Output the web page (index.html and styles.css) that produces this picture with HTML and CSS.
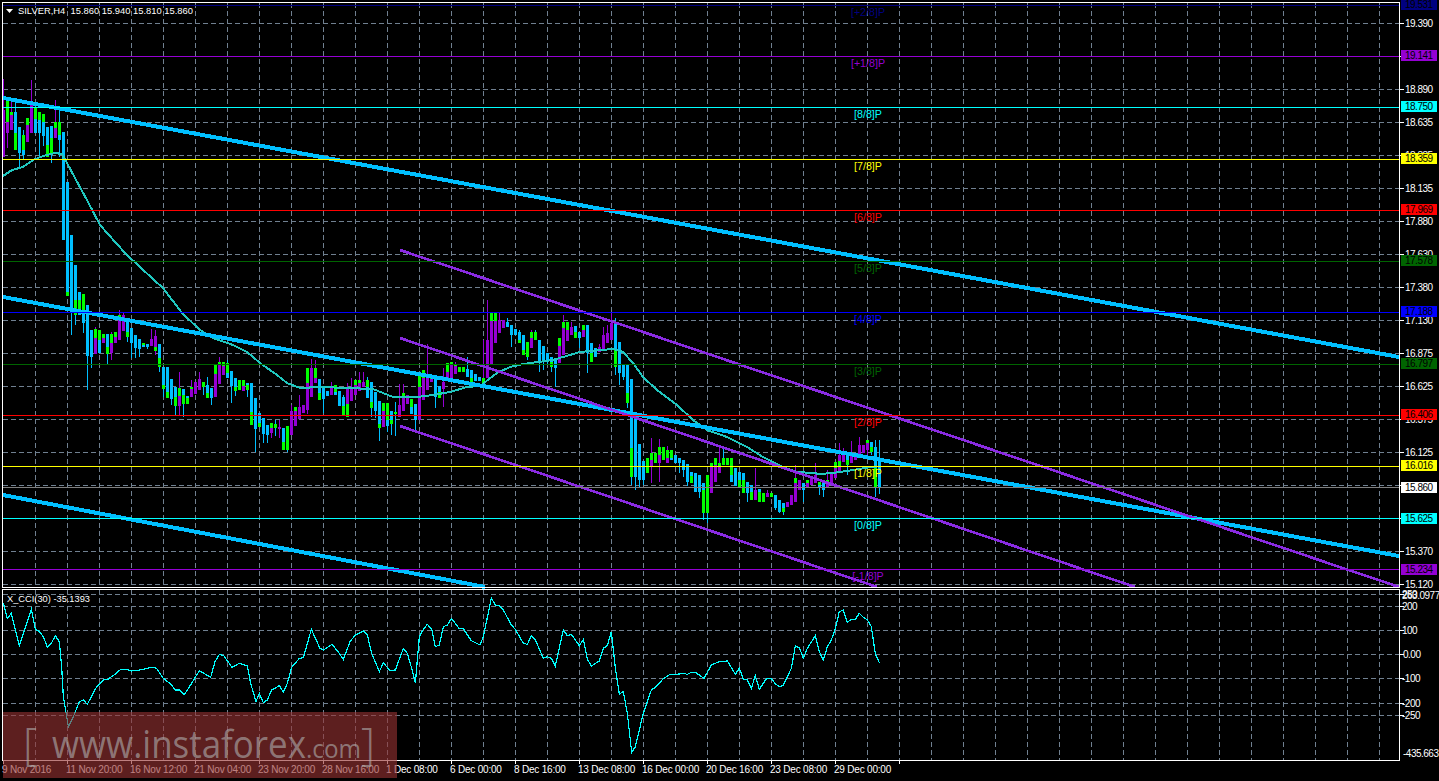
FILE: index.html
```html
<!DOCTYPE html>
<html lang="en">
<head>
<meta charset="utf-8">
<title>SILVER,H4</title>
<link rel="stylesheet" href="styles.css">
</head>
<body>
<main class="terminal">
<svg class="chart" width="1439" height="781" viewBox="0 0 1439 781" xmlns="http://www.w3.org/2000/svg">
  <g id="grid"></g>
  <g id="candles" shape-rendering="crispEdges"></g>
  <polyline id="ma" class="ma"/>
  <g class="trend">
    <line x1="3" y1="98" x2="1399" y2="357"/>
    <line x1="3" y1="297" x2="1399" y2="556"/>
    <line x1="3" y1="495" x2="485" y2="587"/>
  </g>
  <g class="channel">
    <line x1="400" y1="250" x2="1399" y2="587"/>
    <line x1="400" y1="338" x2="1135" y2="587"/>
    <line x1="400" y1="426" x2="877" y2="587"/>
  </g>
  <g class="levels" shape-rendering="crispEdges">
    <line class="c-navy" x1="3" x2="1399" y1="5.5" y2="5.5"/>
    <line class="c-violet" x1="3" x2="1399" y1="56.5" y2="56.5"/>
    <line class="c-cyan" x1="3" x2="1399" y1="107.5" y2="107.5"/>
    <line class="c-yellow" x1="3" x2="1399" y1="159.5" y2="159.5"/>
    <line class="c-red" x1="3" x2="1399" y1="210.5" y2="210.5"/>
    <line class="c-green" x1="3" x2="1399" y1="261.5" y2="261.5"/>
    <line class="c-blue" x1="3" x2="1399" y1="312.5" y2="312.5"/>
    <line class="c-green" x1="3" x2="1399" y1="364.5" y2="364.5"/>
    <line class="c-red" x1="3" x2="1399" y1="415.5" y2="415.5"/>
    <line class="c-yellow" x1="3" x2="1399" y1="466.5" y2="466.5"/>
    <line class="c-gray" x1="3" x2="1399" y1="487.5" y2="487.5"/>
    <line class="c-cyan" x1="3" x2="1399" y1="518.5" y2="518.5"/>
    <line class="c-violet" x1="3" x2="1399" y1="569.5" y2="569.5"/>
  </g>
  <polyline id="cci" class="cci"/>

  <g class="murrey">
    <text class="t-navy" x="868" y="16">[+2/8]P</text>
    <text class="t-violet" x="868" y="67">[+1/8]P</text>
    <text class="t-cyan" x="868" y="118">[8/8]P</text>
    <text class="t-yellow" x="868" y="170">[7/8]P</text>
    <text class="t-red" x="868" y="221">[6/8]P</text>
    <text class="t-green" x="868" y="272">[5/8]P</text>
    <text class="t-blue" x="868" y="323">[4/8]P</text>
    <text class="t-green" x="868" y="375">[3/8]P</text>
    <text class="t-red" x="868" y="426">[2/8]P</text>
    <text class="t-yellow" x="868" y="477">[1/8]P</text>
    <text class="t-cyan" x="868" y="529">[0/8]P</text>
    <text class="t-violet" x="868" y="580">[-1/8]P</text>
  </g>

  <polygon class="menu-arrow" points="6,9 13,9 9.5,13"/>
  <text class="label" x="18" y="14" textLength="175" lengthAdjust="spacingAndGlyphs">SILVER,H4&#160; 15.860 15.940 15.810 15.860</text>
  <text class="label" x="7" y="602" textLength="83" lengthAdjust="spacingAndGlyphs">X_CCI(30) -35.1393</text>

  <g class="axis">
    <text x="1405" y="27">19.390</text>
    <text x="1405" y="93">18.890</text>
    <text x="1405" y="126">18.635</text>
    <text x="1405" y="159">18.385</text>
    <text x="1405" y="192">18.135</text>
    <text x="1405" y="225">17.880</text>
    <text x="1405" y="258">17.630</text>
    <text x="1405" y="291">17.380</text>
    <text x="1405" y="324">17.130</text>
    <text x="1405" y="357">16.875</text>
    <text x="1405" y="390">16.625</text>
    <text x="1405" y="423">16.375</text>
    <text x="1405" y="456">16.125</text>
    <text x="1405" y="555">15.370</text>
    <text x="1405" y="588">15.120</text>
  </g>

  <g class="tags">
    <rect class="f-navy" x="1401" y="0" width="36" height="10"/><text x="1405" y="8">19.531</text>
    <rect class="f-violet" x="1401" y="50" width="36" height="11"/><text x="1405" y="59">19.141</text>
    <rect class="f-cyan" x="1401" y="101" width="36" height="11"/><text x="1405" y="110">18.750</text>
    <rect class="f-yellow" x="1401" y="153" width="36" height="11"/><text x="1405" y="162">18.359</text>
    <rect class="f-red" x="1401" y="204" width="36" height="11"/><text x="1405" y="213">17.969</text>
    <rect class="f-green" x="1401" y="255" width="36" height="11"/><text x="1405" y="264">17.578</text>
    <rect class="f-blue" x="1401" y="306" width="36" height="11"/><text x="1405" y="315">17.188</text>
    <rect class="f-green" x="1401" y="358" width="36" height="11"/><text x="1405" y="367">16.797</text>
    <rect class="f-red" x="1401" y="409" width="36" height="11"/><text x="1405" y="418">16.406</text>
    <rect class="f-yellow" x="1401" y="460" width="36" height="11"/><text x="1405" y="469">16.016</text>
    <rect class="f-white" x="1401" y="482" width="36" height="11"/><text x="1405" y="491">15.860</text>
    <rect class="f-cyan" x="1401" y="513" width="36" height="11"/><text x="1405" y="522">15.625</text>
    <rect class="f-violet" x="1401" y="564" width="36" height="11"/><text x="1405" y="573">15.234</text>
  </g>

  <g class="axis">
    <text x="1402" y="598">250</text>
    <text x="1402" y="599">263.0977</text>
    <text x="1402" y="610">200</text>
    <text x="1402" y="634">100</text>
    <text x="1403" y="658">0.00</text>
    <text x="1402" y="682">-100</text>
    <text x="1402" y="707">-200</text>
    <text x="1402" y="719">-250</text>
    <text x="1403" y="757">-435.663</text>
  </g>

  <g class="axis dates">
    <text x="2" y="773">9 Nov 2016</text>
    <text x="66" y="773">11 Nov 20:00</text>
    <text x="130" y="773">16 Nov 12:00</text>
    <text x="194" y="773">21 Nov 04:00</text>
    <text x="258" y="773">23 Nov 20:00</text>
    <text x="322" y="773">28 Nov 16:00</text>
    <text x="386" y="773">1 Dec 08:00</text>
    <text x="450" y="773">6 Dec 00:00</text>
    <text x="514" y="773">8 Dec 16:00</text>
    <text x="578" y="773">13 Dec 08:00</text>
    <text x="642" y="773">16 Dec 00:00</text>
    <text x="706" y="773">20 Dec 16:00</text>
    <text x="770" y="773">23 Dec 08:00</text>
    <text x="834" y="773">29 Dec 00:00</text>
  </g>

  <g class="frame" shape-rendering="crispEdges">
    <rect x="2.5" y="2.5" width="1397" height="585"/>
    <rect x="2.5" y="589.5" width="1397" height="171"/>
  </g>

  <g class="watermark">
    <rect class="wm-bg" x="3" y="712" width="394" height="66"/>
    <text class="wm-bracket" x="23" y="760">[</text>
    <text class="wm-big" x="52" y="758" textLength="254" lengthAdjust="spacingAndGlyphs">www.instaforex</text>
    <text class="wm-small" x="306" y="758" textLength="55" lengthAdjust="spacingAndGlyphs">.com</text>
    <text class="wm-bracket" x="361" y="760">]</text>
  </g>
</svg>
</main>
<script src="chart.js"></script>
</body>
</html>
```
FILE: styles.css
```css
html, body {
  margin: 0;
  padding: 0;
  background: #000;
  overflow: hidden;
}
.terminal {
  width: 1439px;
  height: 781px;
}
.chart {
  display: block;
}
.gridline {
  stroke: #708090;
  stroke-width: 1;
  stroke-dasharray: 5 3;
}
.tick {
  stroke: #fff;
  stroke-width: 1;
}
.ma {
  fill: none;
  stroke: #20c8c0;
  stroke-width: 2;
  shape-rendering: crispEdges;
}
.cci {
  fill: none;
  stroke: #00ffff;
  stroke-width: 1.2;
  shape-rendering: crispEdges;
}
.trend line {
  stroke: #00bfff;
  stroke-width: 4;
  shape-rendering: crispEdges;
}
.channel line {
  stroke: #8a2be2;
  stroke-width: 2.6;
  shape-rendering: crispEdges;
}
.levels line {
  stroke-width: 1;
}
.c-navy { stroke: #000080; }
.c-violet { stroke: #9400d3; }
.c-cyan { stroke: #00ffff; }
.c-yellow { stroke: #ffff00; }
.c-red { stroke: #ff0000; }
.c-green { stroke: #006400; }
.c-blue { stroke: #0000ff; }
.c-gray { stroke: #808080; }
.murrey text {
  font-family: "Liberation Sans", Arial, sans-serif;
  font-size: 10.7px;
  text-anchor: middle;
}
.t-navy { fill: #000080; }
.t-violet { fill: #9400d3; }
.t-cyan { fill: #00ffff; }
.t-yellow { fill: #ffff00; }
.t-red { fill: #ff0000; }
.t-green { fill: #006400; }
.t-blue { fill: #0000ff; }
.label,
.axis text,
.tags text {
  font-family: "Liberation Sans", Arial, sans-serif;
  font-size: 10px;
  letter-spacing: -0.5px;
}
.label {
  font-size: 9.6px;
  letter-spacing: 0;
}
.label,
.axis text {
  fill: #fff;
}
.dates text {
  letter-spacing: -0.2px;
}
.tags text {
  fill: #000;
}
.f-navy { fill: #000080; }
.f-violet { fill: #9400d3; }
.f-cyan { fill: #00ffff; }
.f-yellow { fill: #ffff00; }
.f-red { fill: #ff0000; }
.f-green { fill: #006400; }
.f-blue { fill: #0000ff; }
.f-white { fill: #fff; }
.menu-arrow {
  fill: #fff;
}
.frame rect {
  fill: none;
  stroke: #fff;
  stroke-width: 1;
}
.body-blue { fill: #00bfff; }
.body-purple { fill: #9400d3; }
.body-lime { fill: #00ff00; }
.wm-bg {
  fill: rgba(150, 50, 50, 0.62);
}
.watermark text {
  font-family: "Open Sans", "Liberation Sans", sans-serif;
  fill: rgba(175, 175, 175, 0.62);
}
.wm-big { font-size: 38px; }
.wm-small { font-size: 25px; }
.wm-bracket { font-size: 44px; font-weight: 300; }
```
FILE: chart.js
```javascript
(function () {
  var NS = 'http://www.w3.org/2000/svg';
  function el(name, attrs, parent) {
    var n = document.createElementNS(NS, name);
    for (var k in attrs) n.setAttribute(k, attrs[k]);
    parent.appendChild(n);
    return n;
  }

  var grid = document.getElementById('grid');
  var x;
  for (x = 35; x < 1399; x += 32) {
    el('line', { 'class': 'gridline', x1: x + .5, x2: x + .5, y1: 3, y2: 587 }, grid);
    el('line', { 'class': 'gridline', x1: x + .5, x2: x + .5, y1: 590, y2: 760 }, grid);
  }
  [23, 56, 89, 122, 155, 188, 221, 254, 287, 320, 353, 386, 419, 452, 485, 518, 551, 584,
   594, 606, 630, 654, 678, 703, 715].forEach(function (y) {
    el('line', { 'class': 'gridline', x1: 3, x2: 1399, y1: y + .5, y2: y + .5 }, grid);
    el('line', { 'class': 'tick', x1: 1400, x2: 1404, y1: y + .5, y2: y + .5 }, grid);
  });
  for (x = 3; x < 900; x += 64) {
    el('line', { 'class': 'tick', x1: x + .5, x2: x + .5, y1: 760, y2: 764 }, grid);
  }

  // x, colour, body top, body bottom, wick top, wick bottom, lime top, lime bottom
  var C = [
    [3,'p',110,157,79,0],[7,'p',100,133,0,148,100,122],[11,'p',112,130,102,0,112,115],[15,'b',112,150,102,0,133,150],
    [19,'b',127,153,0,168],[23,'b',135,155,130,160,135,150],[27,'p',118,142,0,0,118,125],[31,'p',105,133,80,0],
    [35,'b',108,133,103,0,108,119],[39,'b',112,133,0,158,112,120],[43,'b',114,136,0,146,114,122],[47,'b',127,157,0,0,145,157],
    [51,'b',126,155,0,163,138,155],[55,'p',122,138,100,0,122,128],[59,'b',122,140,110,157,122,135],[63,'b',132,240,0,0],
    [67,'b',182,296,0,0,292,296],[71,'b',235,312,0,335],[75,'b',265,315,0,325,300,315],[79,'b',292,315,0,0,300,310],
    [83,'b',294,323,0,333,294,310],[87,'b',305,356,0,390],[91,'b',330,357,0,368],[95,'p',329,354,327,0,329,338],
    [99,'b',330,353,0,0,330,340],[103,'p',334,343,0,0,334,338],[107,'b',334,354,0,365,347,354],[111,'p',334,353,332,360,334,343],
    [115,'p',332,343,0,0,332,337],[119,'p',315,340,310,0,315,320],[123,'p',315,331,312,0],[127,'b',319,337,0,342,332,337],
    [131,'b',328,343,0,358],[135,'b',335,348,0,358],[139,'b',339,349,0,357],[143,'b',343,347,0,0,343,345],
    [147,'b',344,347,0,349],[151,'p',339,346,329,0],[155,'p',336,351,330,355,347,351],[159,'b',344,367,0,372,358,367],
    [163,'b',367,389,0,397,385,389],[167,'b',367,398,0,0,392,398],[171,'b',379,399,0,405],[175,'b',387,406,0,415,397,406],
    [179,'p',388,406,372,415,388,396],[183,'b',389,404,0,417,395,404],[187,'b',396,404,0,0,398,404],[191,'p',387,397,380,0,387,389],
    [195,'p',382,394,0,0],[199,'p',379,390,372,0],[203,'b',382,387,0,395,382,387],[207,'b',385,398,377,0,393,398],
    [211,'b',388,398,0,405],[215,'p',365,397,0,0,365,374],[219,'p',362,384,357,0,362,365],[223,'p',362,375,0,0,362,366],
    [227,'b',363,378,360,0,363,373],[231,'b',371,386,0,403],[235,'b',378,391,0,396,387,391],[239,'b',380,390,0,0,380,390],
    [243,'p',380,391,0,0,380,386],[247,'b',383,390,0,397,385,390],[251,'b',383,425,0,0,412,425],[255,'b',398,429,0,452],
    [259,'b',413,427,0,0,423,427],[263,'b',418,434,0,443],[267,'b',425,435,0,443],[271,'p',423,433,0,438,423,428],
    [275,'b',424,428,420,436,424,428],[279,'p',427,429,420,438],[283,'b',428,450,0,0,442,450],[287,'b',426,450,0,452,426,450],
    [291,'p',411,435,405,0],[295,'p',407,426,0,0,407,411],[299,'p',407,419,395,0],[303,'p',405,413,0,0],
    [307,'p',368,410,0,414,368,383],[311,'p',368,397,359,0],[315,'p',368,383,360,0,368,378],[319,'b',379,400,0,0,393,400],
    [323,'b',386,399,0,413],[327,'b',391,396,0,0],[331,'p',388,395,382,0],[335,'b',385,395,0,0,385,392],
    [339,'b',391,406,0,0],[343,'b',397,415,395,0,406,415],[347,'p',388,417,383,0,404,417],[351,'p',388,401,378,0],
    [355,'p',380,395,0,0,380,385],[359,'p',380,391,372,0,380,383],[363,'p',382,387,372,0],[367,'b',380,398,377,0,380,387],
    [371,'b',382,408,0,417,402,408],[375,'b',392,411,0,418],[379,'b',401,428,0,441,424,428],[383,'p',403,427,0,0,403,411],
    [387,'b',403,426,0,432,403,420],[391,'b',411,424,0,435,420,424],[395,'b',412,414,402,436,412,414],[399,'p',405,417,384,0],
    [403,'p',393,411,384,0,393,397],[407,'p',395,404,0,0],[411,'b',399,414,0,0,399,407],[415,'b',404,420,0,431],
    [419,'p',373,420,0,0,373,387],[423,'p',370,400,0,0,370,378],[427,'p',377,390,344,0],[431,'p',375,382,0,0,375,379],
    [435,'b',377,397,0,408],[439,'b',386,398,0,0,392,398],[443,'p',382,389,368,407],[447,'p',363,380,0,0,363,372],
    [451,'p',362,380,0,0,362,365],[455,'p',365,374,362,0,365,366],[459,'p',367,372,0,0,367,372],[463,'p',367,372,0,0,367,372],
    [467,'b',369,377,357,0],[471,'b',370,382,0,0,378,382],[475,'b',374,381,0,0],[479,'b',377,381,0,0],
    [483,'p',378,386,340,0,378,384],[487,'p',340,378,300,0],[491,'p',313,365,0,0,313,321],[495,'p',313,343,0,0,313,321],
    [499,'p',320,333,312,0],[503,'p',320,328,0,0],[507,'b',322,327,318,0],[511,'b',325,335,0,347],
    [515,'b',329,335,0,0],[519,'b',332,343,330,0,340,343],[523,'b',335,355,0,0,350,355],[527,'b',342,357,0,360,342,357],
    [531,'p',332,348,330,0,332,338],[535,'b',332,340,330,0,332,340],[539,'b',340,362,0,372],[543,'b',346,362,0,370],
    [547,'b',353,362,0,365],[551,'b',357,367,0,372,362,367],[555,'b',359,368,0,387],[559,'p',338,363,0,0,338,346],
    [563,'p',322,355,315,0,322,328],[567,'p',322,341,0,0,322,330],[571,'p',327,335,322,0],[575,'b',326,338,0,0,332,338],
    [579,'b',332,338,0,348],[583,'p',325,337,0,0,325,330],[587,'b',325,353,0,373],[591,'b',343,362,0,362,353,362],
    [595,'b',348,357,0,0],[599,'p',347,352,344,0],[603,'p',335,350,327,0],[607,'p',333,343,325,0],
    [611,'p',323,340,313,0],[615,'b',322,367,318,375,350,367],[619,'b',342,373,0,385],[623,'b',365,377,0,380],
    [627,'b',365,403,0,408,393,403],[631,'b',379,477,0,485,448,477],[635,'b',417,477,0,490],[639,'b',444,480,0,488],
    [643,'b',461,480,0,485],[647,'b',458,473,0,0,458,473],[651,'p',453,467,438,483,453,460],[655,'b',453,463,0,0,453,463],
    [659,'p',447,463,439,482,447,455],[663,'b',447,460,0,0,447,460],[667,'p',450,463,446,0,450,458],[671,'b',450,460,0,0,450,458],
    [675,'b',455,463,0,0],[679,'b',458,463,0,473],[683,'b',460,470,0,477],[687,'b',464,482,0,486],
    [691,'b',472,483,0,0,476,483],[695,'b',473,492,0,0],[699,'b',475,492,0,498],[703,'b',483,513,0,520,490,513],
    [707,'b',475,513,0,523,475,513],[711,'p',463,493,0,0,463,467],[715,'p',458,482,0,0,458,465],[719,'p',463,473,448,0,463,466],
    [723,'b',458,465,448,0,458,465],[727,'b',458,465,0,0,458,465],[731,'b',458,482,0,0,458,475],[735,'b',468,486,0,0],
    [739,'b',472,487,0,0,480,487],[743,'b',473,493,0,0,480,493],[747,'b',482,493,0,502],[751,'b',485,500,0,0,492,500],
    [755,'p',490,500,468,0],[759,'b',489,502,0,0,492,502],[763,'b',493,502,0,0,493,502],[767,'p',493,497,490,0],
    [771,'b',493,497,0,0,493,497],[775,'b',495,508,0,510],[779,'b',500,512,0,513],[783,'b',503,512,0,515,508,512],
    [787,'p',502,507,0,0],[791,'p',495,505,0,0],[795,'p',478,502,465,0,478,483],[799,'p',480,490,0,0],
    [803,'b',483,490,0,502],[807,'p',480,487,0,0,480,483],[811,'p',477,485,0,0],[815,'p',475,483,463,0],
    [819,'b',482,488,0,495,482,485],[823,'b',483,490,0,497],[827,'p',480,487,470,0,480,484],[831,'p',473,483,0,0],
    [835,'p',462,478,0,0,462,468],[839,'p',455,472,443,0,461,466],[843,'p',453,462,448,0],[847,'b',455,465,0,475,460,465],
    [851,'p',453,463,441,0],[855,'p',453,460,0,0],[859,'p',445,455,437,0],[863,'p',445,453,0,0],
    [867,'p',440,450,0,455,440,443],[871,'b',442,452,0,455,447,452],[875,'b',447,487,440,497,468,487],[879,'b',460,487,440,494]
  ];

  var g = document.getElementById('candles');
  C.forEach(function (c) {
    var xx = c[0], col = c[1] === 'b' ? 'body-blue' : 'body-purple';
    var wt = c[4] || c[2], wb = c[5] || c[3];
    el('rect', { 'class': col, x: xx, y: wt, width: 1, height: wb - wt }, g);
    el('rect', { 'class': col, x: xx - 1, y: c[2], width: 3, height: c[3] - c[2] }, g);
    if (c[6]) el('rect', { 'class': 'body-lime', x: xx - 1, y: c[6], width: 3, height: c[7] - c[6] }, g);
  });

  document.getElementById('ma').setAttribute('points',
    '3,176 12,170 23,167 33,160 43,156 55,153 62,154 67,163 75,178 87,200 100,225 125,253 154,280 163,288 ' +
    '182,313 200,330 213,338 233,345 247,352 260,363 277,375 287,383 300,388 320,387 347,388 373,389 393,397 ' +
    '417,397 433,395 450,392 467,387 480,386 497,373 510,367 523,364 553,360 563,357 580,352 613,349 623,352 ' +
    '633,363 643,377 657,390 677,405 693,420 707,430 727,437 747,447 763,457 773,462 783,467 797,472 813,473 ' +
    '820,474 833,473 853,470 877,466');

  var a = [[10,70],[22,115],[34,100],[46,150],[58,198],[70,160],[94,88],[106,148],[118,155],[130,170],[142,202],[154,190],[166,167],[178,185],[185,260],[190,350],[205,440],[220,410],[238,365],[250,360],[262,373],[290,320],[310,300],[325,297],[345,283],[362,268],[380,268],[395,273],[420,270],[455,262],[470,265],[490,295],[512,312],[526,330],[540,330],[552,345],[575,310],[598,272],[632,292],[645,245],[658,223],[672,228],[696,262],[718,250],[742,258],[752,310],[768,365],[778,340],[790,368],[802,360],[815,330],[838,317],[850,337],[862,310],[875,262],[898,235],[910,233],[934,148],[960,205],[970,210],[996,193],[1018,220],[1030,238],[1050,185],[1066,165],[1090,153],[1102,165],[1115,220],[1138,275],[1150,248],[1170,272],[1186,270],[1210,205],[1222,220],[1235,265],[1246,310],[1258,170],[1270,148],[1282,133],[1296,150],[1306,200],[1318,195],[1330,140],[1342,135],[1354,115],[1378,146],[1390,146],[1414,182],[1440,195]];
  var b = [[10,170],[34,55],[46,75],[58,78],[70,90],[94,135],[106,148],[130,190],[142,193],[154,168],[166,180],[190,235],[202,230],[214,235],[226,258],[250,150],[262,167],[274,163],[298,197],[310,178],[322,238],[334,258],[358,243],[370,205],[382,197],[394,155],[406,265],[418,342],[430,335],[442,400],[455,517],[466,500],[490,400],[514,330],[526,322],[550,296],[570,283],[590,283],[610,280],[622,283],[634,277],[646,277],[672,295],[694,255],[718,245],[742,243],[766,283],[778,265],[790,297],[802,300],[814,325],[826,287],[838,328],[860,295],[874,295],[886,312],[900,320],[910,315],[934,265],[946,198],[958,203],[970,235],[982,205],[1006,167],[1018,215],[1030,240],[1042,200],[1054,180],[1066,145],[1078,95],[1090,90],[1102,127],[1114,118],[1126,118],[1138,100],[1150,112],[1162,120],[1174,140],[1186,222],[1198,248]];
  var pts = a.map(function (p) { return (p[0] / 3) + ',' + (580 + p[1] / 3); })
    .concat(b.map(function (p) { return (480 + p[0] / 3) + ',' + (580 + p[1] / 3); }));
  document.getElementById('cci').setAttribute('points', pts.join(' '));
})();
```
